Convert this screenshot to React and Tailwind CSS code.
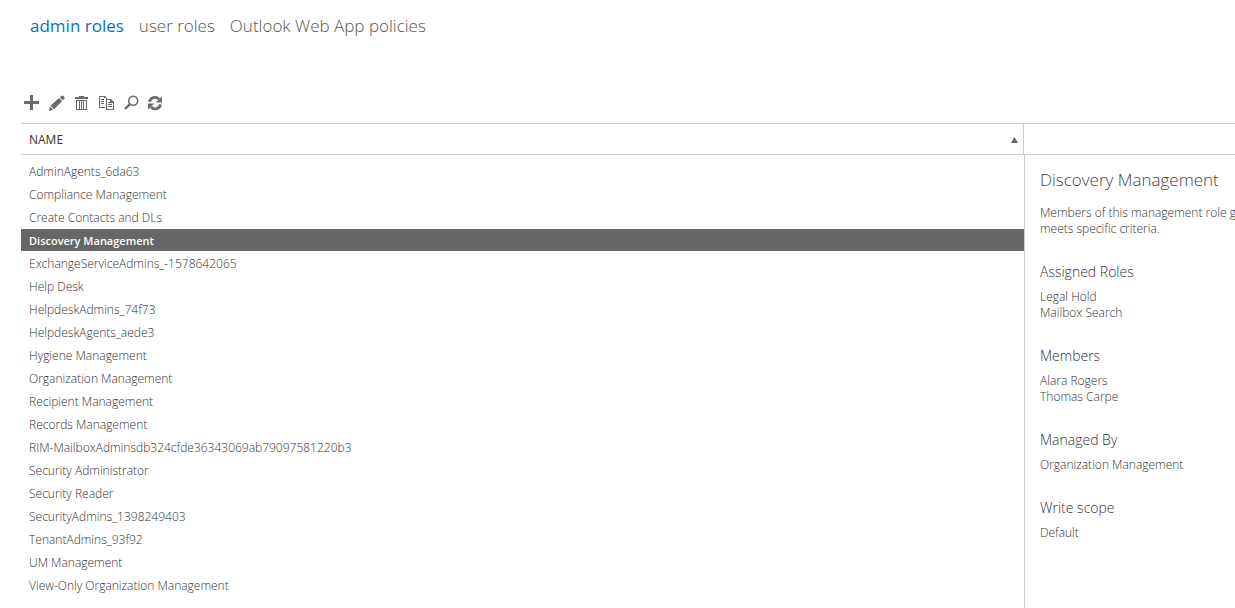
const roleGroups = [
  'AdminAgents_6da63',
  'Compliance Management',
  'Create Contacts and DLs',
  'Discovery Management',
  'ExchangeServiceAdmins_-1578642065',
  'Help Desk',
  'HelpdeskAdmins_74f73',
  'HelpdeskAgents_aede3',
  'Hygiene Management',
  'Organization Management',
  'Recipient Management',
  'Records Management',
  'RIM-MailboxAdminsdb324cfde36343069ab79097581220b3',
  'Security Administrator',
  'Security Reader',
  'SecurityAdmins_1398249403',
  'TenantAdmins_93f92',
  'UM Management',
  'View-Only Organization Management',
];

const details = [
  { title: 'Assigned Roles', items: ['Legal Hold', 'Mailbox Search'] },
  { title: 'Members', items: ['Alara Rogers', 'Thomas Carpe'] },
  { title: 'Managed By', items: ['Organization Management'] },
  { title: 'Write scope', items: ['Default'] },
];

function ToolButton({ label, width = 16, children }) {
  return (
    <button type="button" aria-label={label} className="text-[#6a6a6a]">
      <svg viewBox={`0 0 ${width} 16`} width={width} height="16" fill="currentColor" aria-hidden="true">
        {children}
      </svg>
    </button>
  );
}

function Toolbar() {
  return (
    <div className="flex gap-[9px] pl-[3px]">
      <ToolButton label="New">
        <path d="M6 0h3v6h6v3H9v6H6V9H0V6h6z" />
      </ToolButton>
      <ToolButton label="Edit">
        <path d="M12.2.9a1.5 1.5 0 0 1 2.1 0l.9.9a1.5 1.5 0 0 1 0 2.1L13.9 5.2 10.9 2.2zM10.1 3l3 3-8 8.2-3.6-3.4zM.9 11.6l3.4 3.1L0 16z" />
      </ToolButton>
      <ToolButton label="Delete">
        <path fillRule="evenodd" d="M5 1h5v1h4v2H1V2h4zM2 5h11v10H2zM3 6v8h2V6zM6 6v8h1V6zM8 6v8h1V6zM10 6v8h2V6z" />
      </ToolButton>
      <ToolButton label="Copy">
        <path
          fillRule="evenodd"
          d="M0 1h6l2 2v1H7V3H5V2H1v10h5v1H0zM2 4h3v1H2zM2 6h3v1H2zM2 8h3v1H2zM7 4h5l3 3v8H7zM8 5v9h6V8h-3V5zM9 7h2v1H9zM9 9h4v1H9zM9 11h4v1H9z"
        />
      </ToolButton>
      <ToolButton label="Search" width={15}>
        <circle cx="9.2" cy="5.8" r="4.5" fill="none" stroke="currentColor" strokeWidth="1.6" />
        <path d="M6 9 1 14" stroke="currentColor" strokeWidth="2.4" />
      </ToolButton>
      <ToolButton label="Refresh" width={15}>
        <path d="M1.4 6.8A5.6 5.6 0 0 1 11 4.2" fill="none" stroke="currentColor" strokeWidth="2.8" />
        <path d="M14 1.4v6.2H7.8z" />
        <path d="M12.6 9.4A5.6 5.6 0 0 1 3 12" fill="none" stroke="currentColor" strokeWidth="2.8" />
        <path d="M0 14.8V8.6h6.2z" />
      </ToolButton>
    </div>
  );
}

export default function App() {
  return (
    <div className="flex min-h-screen flex-col overflow-hidden bg-white pl-[21px] font-['Open_Sans','Noto_Sans',sans-serif] text-xs font-light text-[#333333]">
      <nav className="flex gap-[15px] pt-[14px] pl-[9px] text-[17px] leading-6">
        <a href="#admin-roles" aria-current="page" className="font-normal text-[#0072c6]">admin roles</a>
        <a href="#user-roles" className="text-[#555555]">user roles</a>
        <a href="#policies" className="text-[#555555]">Outlook Web App policies</a>
      </nav>

      <div className="pt-[57px] pb-3">
        <Toolbar />
      </div>

      <main className="flex grow border-t border-[#c8ced2]">
        <section className="min-w-0 grow">
          <table className="w-full border-separate border-spacing-0 text-left">
            <thead>
              <tr>
                <th aria-sort="ascending" className="h-[31px] border-r border-b border-[#c8ced2] px-0 pt-0.5 pb-0 font-normal">
                  <button type="button" className="flex w-full items-center justify-between pr-[5px] pl-2 text-[#333333]">
                    NAME
                    <svg viewBox="0 0 7 6" width="7" height="6" fill="#5f685f" aria-hidden="true">
                      <path d="M3.5 0 7 6H0z" />
                    </svg>
                  </button>
                </th>
              </tr>
            </thead>
            <tbody className="before:block before:h-[5px] before:content-['']">
              {roleGroups.map((name) => {
                const selected = name === 'Discovery Management';
                return (
                  <tr key={name} aria-selected={selected}>
                    <td
                      className={
                        selected
                          ? 'h-[23px] border-b border-white bg-[#666666] px-2 pt-0.5 pb-0 text-[11px] leading-4 font-semibold text-white'
                          : 'h-[23px] border-b border-white px-2 pt-0.5 pb-0 leading-4'
                      }
                    >
                      {name}
                    </td>
                  </tr>
                );
              })}
            </tbody>
          </table>
        </section>

        <aside className="flex w-[211px] shrink-0 flex-col">
          <div className="h-[31px] shrink-0 border-b border-[#c8ced2]" />
          <div className="flex grow flex-col gap-[25px] overflow-hidden border-l border-[#c8ced2] pt-[13px] pl-[15px] leading-4">
            <header>
              <h1 className="pb-[13px] text-[17px] leading-6 whitespace-nowrap text-[#444444]">Discovery Management</h1>
              <p className="whitespace-nowrap">
                Members of this management role group
                <br />
                meets specific criteria.
              </p>
            </header>
            {details.map(({ title, items }) => (
              <section key={title}>
                <h2 className="pb-[7px] text-sm leading-5">{title}</h2>
                <ul>
                  {items.map((item) => (
                    <li key={item}>{item}</li>
                  ))}
                </ul>
              </section>
            ))}
          </div>
        </aside>
      </main>
    </div>
  );
}
